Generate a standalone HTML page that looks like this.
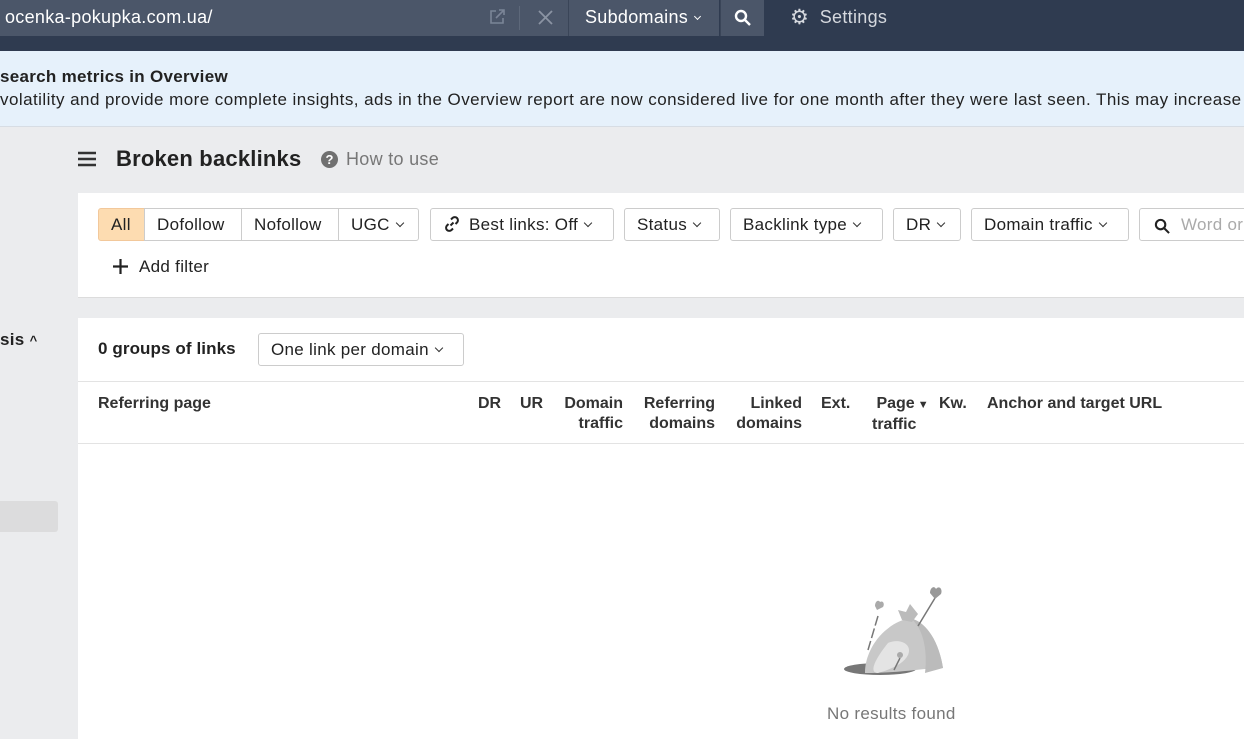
<!DOCTYPE html>
<html><head><meta charset="utf-8"><style>
*{box-sizing:border-box;margin:0;padding:0}
body{width:1244px;height:739px;overflow:hidden;background:#ebecee;font-family:"Liberation Sans",sans-serif;color:#222;position:relative;letter-spacing:0.3px}
.top{position:absolute;left:0;top:0;width:1244px;height:51px;background:#2f3b50}
.url{position:absolute;left:0;top:0;width:568px;height:36px;background:#4b5669;color:#fff;font-size:18px;line-height:34px;padding-left:5px}
.sub{position:absolute;left:568px;top:0;width:151px;height:36px;background:#4b5669;border-left:1px solid #3a4558;color:#fff;font-size:18px;line-height:34px;padding-left:16px}
.srch{position:absolute;left:720px;top:0;width:44px;height:36px;background:#4b5669;border-left:1px solid #3a4558}
.set{position:absolute;left:790px;top:0;color:#d5d8de;font-size:18px;line-height:34px}
.banner{position:absolute;left:0;top:51px;width:1244px;height:76px;background:#e6f1fb;border-bottom:1px solid #d7dde4;font-size:17px;white-space:nowrap;overflow:hidden}
.banner b{position:absolute;left:0;top:16px}
.banner span{position:absolute;left:0;top:39px;color:#222;letter-spacing:0.45px}
.box{position:absolute;background:#fff}
.btn{position:absolute;top:208px;height:33px;border:1px solid #ccc;border-radius:3px;font-size:17px;line-height:31px;padding:0 12px;color:#222;background:#fff;white-space:nowrap}
.chev{display:inline-block;width:6px;height:6px;border-right:1.5px solid #333;border-bottom:1.5px solid #333;transform:rotate(45deg);margin-left:7px;position:relative;top:-4px}
.th{position:absolute;top:394px;font-size:16px;font-weight:bold;line-height:20px;color:#333;letter-spacing:0}
</style></head><body>
<div class="top">
<div class="url">ocenka-pokupka.com.ua/
<svg style="position:absolute;left:488px;top:8px" width="18" height="18" viewBox="0 0 18 18" fill="none" stroke="#7b8597" stroke-width="1.6"><path d="M8 3H3v12h12v-5M11 2h5v5M16 2l-8 8"/></svg>
<div style="position:absolute;left:519px;top:6px;width:1px;height:24px;background:#5d687a"></div>
<svg style="position:absolute;left:538px;top:10px" width="15" height="15" viewBox="0 0 15 15" stroke="#8b94a3" stroke-width="1.8"><path d="M1 1l13 13M14 1L1 14"/></svg>
</div>
<div class="sub">Subdomains<span class="chev" style="border-color:#fff;width:5px;height:5px"></span></div>
<div class="srch"><svg style="position:absolute;left:13px;top:9px" width="17" height="17" viewBox="0 0 17 17" fill="none" stroke="#fff" stroke-width="2.4"><circle cx="7" cy="7" r="5"/><path d="M11 11l5 5"/></svg></div>
<div class="set"><span style="font-size:21px;position:relative;top:1px">⚙</span>&nbsp; Settings</div>
</div>
<div class="banner"><b>search metrics in Overview</b><span>volatility and provide more complete insights, ads in the Overview report are now considered live for one month after they were last seen. This may increase</span></div>

<div style="position:absolute;left:0;top:501px;width:58px;height:31px;background:#dcdcdd;border-radius:0 3px 3px 0"></div>
<div style="position:absolute;left:0;top:330px;font-size:17px;font-weight:bold">sis <span style="font-size:13px">^</span></div>

<svg style="position:absolute;left:78px;top:151px" width="18" height="16"><path d="M0 2h18M0 8h18M0 14h18" stroke="#333" stroke-width="2.4"/></svg>
<div style="position:absolute;left:116px;top:146px;font-size:22px;font-weight:bold;color:#222;letter-spacing:0.2px">Broken backlinks</div>
<div style="position:absolute;left:321px;top:151px;width:17px;height:17px;border-radius:50%;background:#707070;color:#fff;font-size:13px;font-weight:bold;text-align:center;line-height:17px;letter-spacing:0">?</div>
<div style="position:absolute;left:346px;top:149px;font-size:18px;color:#777">How to use</div>

<div class="box" style="left:78px;top:193px;width:1166px;height:105px;border-bottom:1px solid #dcdcdc"></div>
<div class="btn" style="left:98px;width:47px;background:#fddcb1;border-color:#f2c89b;border-radius:3px 0 0 3px">All</div>
<div class="btn" style="left:144px;width:98px;border-radius:0">Dofollow</div>
<div class="btn" style="left:241px;width:98px;border-radius:0">Nofollow</div>
<div class="btn" style="left:338px;width:81px;border-radius:0 3px 3px 0">UGC<span class="chev"></span></div>
<div class="btn" style="left:430px;width:184px"><svg width="18" height="18" viewBox="0 0 18 18" fill="none" stroke="#222" stroke-width="2" style="position:relative;top:3px;margin-right:8px"><path d="M7.5 10.5l3-3M8 4.5l1.5-1.5a3 3 0 014.5 4.5L12.5 9M10 13.5L8.5 15A3 3 0 014 10.5L5.5 9"/></svg>Best links: Off<span class="chev"></span></div>
<div class="btn" style="left:624px;width:96px">Status<span class="chev"></span></div>
<div class="btn" style="left:730px;width:153px">Backlink type<span class="chev"></span></div>
<div class="btn" style="left:893px;width:68px">DR<span class="chev"></span></div>
<div class="btn" style="left:971px;width:158px">Domain traffic<span class="chev"></span></div>
<div class="btn" style="left:1139px;width:120px;color:#aaa;padding-left:41px">Word or<svg style="position:absolute;left:14px;top:9px" width="16" height="16" viewBox="0 0 17 17" fill="none" stroke="#222" stroke-width="2.2"><circle cx="7" cy="7" r="5"/><path d="M11 11l5 5"/></svg></div>
<svg style="position:absolute;left:112px;top:258px" width="17" height="17"><path d="M8.5 1v15M1 8.5h15" stroke="#222" stroke-width="2.2"/></svg>
<div style="position:absolute;left:139px;top:257px;font-size:17px">Add filter</div>

<div class="box" style="left:78px;top:318px;width:1166px;height:421px"></div>
<div style="position:absolute;left:98px;top:339px;font-size:17px;font-weight:bold;letter-spacing:0.1px">0 groups of links</div>
<div class="btn" style="left:258px;top:333px;width:206px">One link per domain<span class="chev"></span></div>
<div style="position:absolute;left:78px;top:381px;width:1166px;height:1px;background:#e3e3e3"></div>
<div style="position:absolute;left:78px;top:443px;width:1166px;height:1px;background:#e3e3e3"></div>
<div class="th" style="left:98px">Referring page</div>
<div class="th" style="left:478px">DR</div>
<div class="th" style="left:520px">UR</div>
<div class="th" style="left:560px;text-align:right;width:63px">Domain<br>traffic</div>
<div class="th" style="left:640px;text-align:right;width:75px">Referring<br>domains</div>
<div class="th" style="left:734px;text-align:right;width:68px">Linked<br>domains</div>
<div class="th" style="left:821px">Ext.</div>
<div class="th" style="left:872px">&nbsp;Page<span style="font-size:11px"> ▼</span><br>traffic</div>
<div class="th" style="left:939px">Kw.</div>
<div class="th" style="left:987px">Anchor and target URL</div>

<svg style="position:absolute;left:840px;top:578px" width="110" height="100" viewBox="0 0 110 100">
<ellipse cx="40" cy="91" rx="36" ry="6" fill="#777"/>
<path d="M25 95C25 70 45 45 70 40c20 5 30 30 33 50-20 0-40 5-78 5z" fill="#c8c8c8"/>
<path d="M48 65c10-5 25 0 20 12-5 10-20 15-30 18-8 0-6-10 10-30z" fill="#e4e4e4"/>
<path d="M70 40c12 8 18 30 15 55l18-5c-3-20-13-45-33-50z" fill="#bbb"/>
<path d="M62 42l-4-10 8 2 4-8 8 10-6 8z" fill="#bbb"/>
<path d="M78 48l17-28" stroke="#777" stroke-width="1.5"/>
<path d="M90 15c0-5 4-8 6-4 3-4 7 0 5 5l-6 5z" fill="#999"/>
<path d="M38 38l-10 34" stroke="#777" stroke-width="1.5" stroke-dasharray="10 3"/>
<path d="M35 28c0-4 3-7 5-4 3-2 5 2 3 5l-6 3z" fill="#aaa"/>
<path d="M60 80l-6 12" stroke="#777" stroke-width="1.5"/>
<circle cx="60" cy="77" r="3" fill="#aaa"/>
</svg>
<div style="position:absolute;left:827px;top:704px;font-size:17px;color:#777">No results found</div>
</body></html>
